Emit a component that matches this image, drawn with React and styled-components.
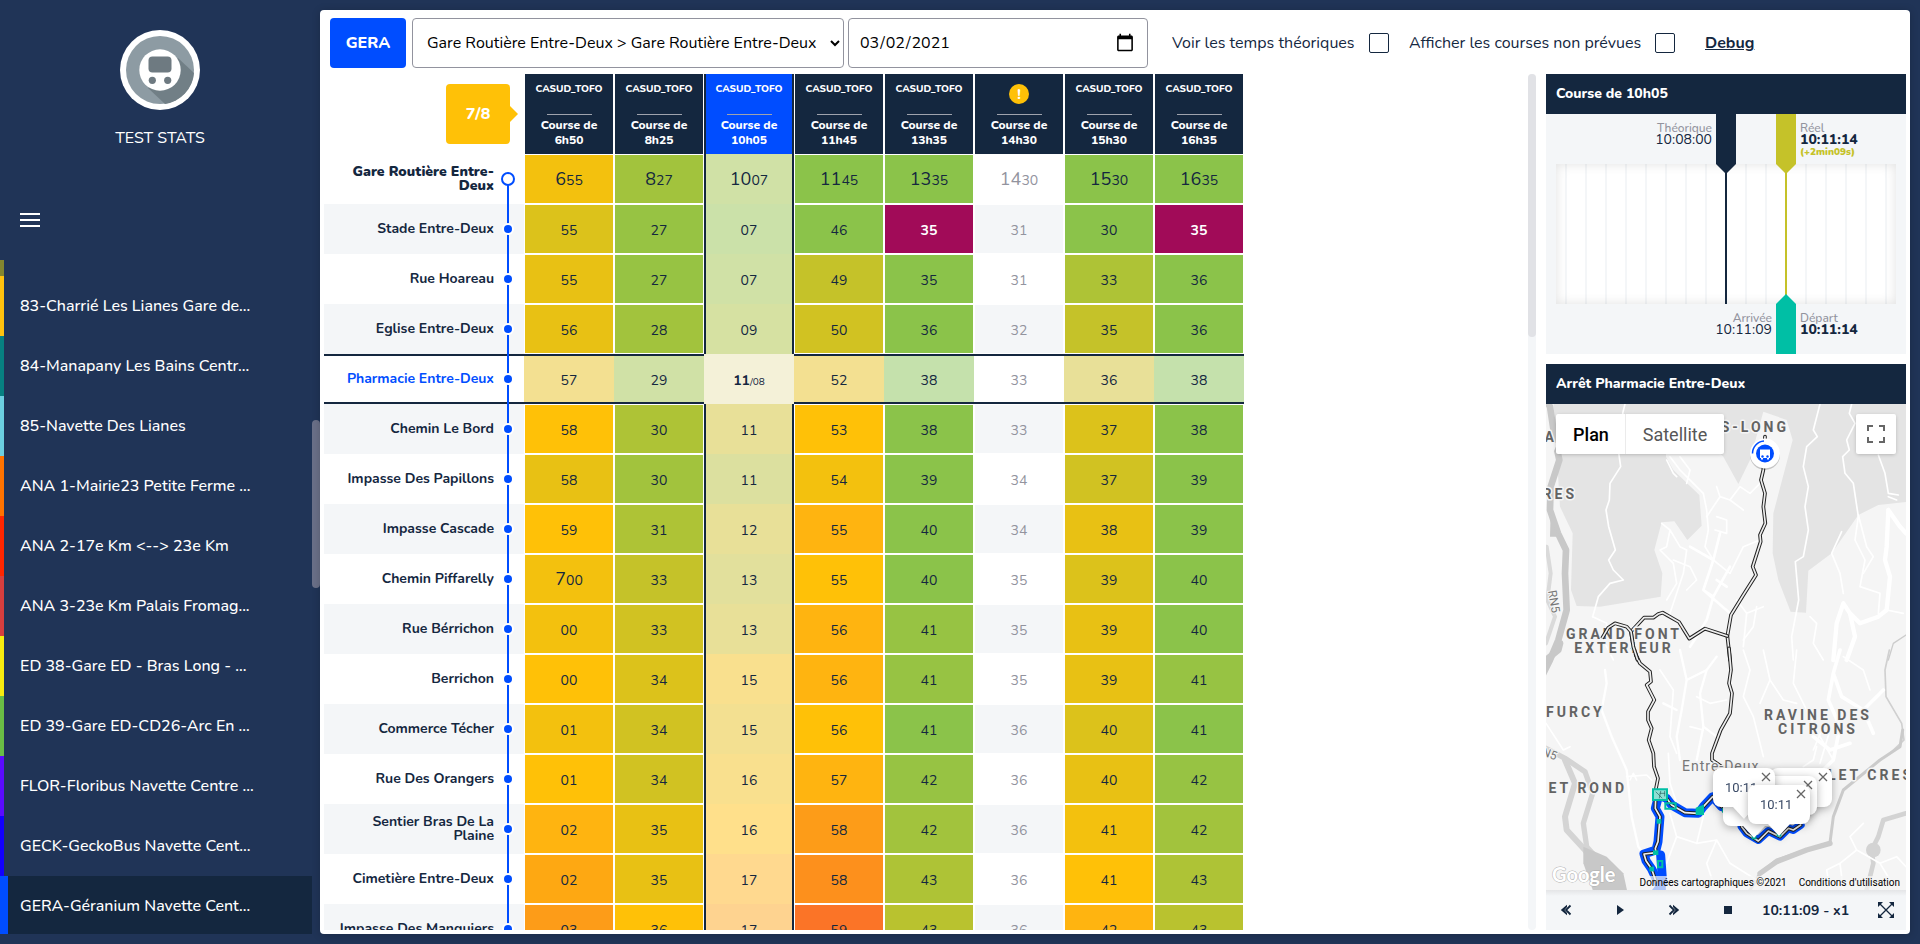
import React from "react";
import styled, { createGlobalStyle, css } from "styled-components";

const navy = "#14273f";
const blue = "#004dff";
const pale = "#f4f6f8";
const grey = "#92939e";
const amber = "#ffc107";

const GlobalStyle = createGlobalStyle`
  *, *::before, *::after { box-sizing: border-box; }
  body {
    margin: 0;
    background: #203457;
    color: ${navy};
    font-family: Nunito, Lato, "Noto Sans", sans-serif;
    font-size: 16px;
  }
  button, input, select { font: inherit; color: inherit; }
`;

/* ---------- data ---------- */

const lines = [
  { name: "83-Charrié Les Lianes Gare de...", color: "#ffc20e" },
  { name: "84-Manapany Les Bains Centr...", color: "#078081" },
  { name: "85-Navette Des Lianes", color: "#6ccfe0" },
  { name: "ANA 1-Mairie23 Petite Ferme ...", color: "#ff7300" },
  { name: "ANA 2-17e Km <--> 23e Km", color: "#ff2600" },
  { name: "ANA 3-23e Km Palais Fromag...", color: "#d63e3e" },
  { name: "ED 38-Gare ED - Bras Long - ...", color: "#f7ec0f" },
  { name: "ED 39-Gare ED-CD26-Arc En ...", color: "#69bd45" },
  { name: "FLOR-Floribus Navette Centre ...", color: "#5b0bff" },
  { name: "GECK-GeckoBus Navette Cent...", color: "#1200ff" },
  { name: "GERA-Géranium Navette Cent...", color: blue, selected: true },
];

const runs = [
  { time: "6h50", device: "CASUD_TOFO" },
  { time: "8h25", device: "CASUD_TOFO" },
  { time: "10h05", device: "CASUD_TOFO", active: true },
  { time: "11h45", device: "CASUD_TOFO" },
  { time: "13h35", device: "CASUD_TOFO" },
  { time: "14h30", missing: true },
  { time: "15h30", device: "CASUD_TOFO" },
  { time: "16h35", device: "CASUD_TOFO" },
];

const delayScale = [
  [139, 195, 74], [151, 195, 67], [162, 195, 61], [174, 195, 54],
  [185, 194, 47], [197, 194, 41], [209, 194, 34], [220, 194, 27],
  [232, 193, 20], [243, 193, 14], [255, 193, 7], [255, 180, 16],
  [254, 168, 18], [253, 156, 24], [253, 144, 28], [251, 116, 39],
];

// Each entry is "minutes:delay level"; "hour.minutes" opens a new hour,
// "e" marks an early run and "n" a run without any reading.
const stops = [
  ["Gare Routière Entre-Deux", "6.55:9 8.27:2 10.07:2 11.45:0 13.35:0 14.30:n 15.30:0 16.35:0"],
  ["Stade Entre-Deux", "55:7 27:1 07:1 46:0 35:e 31:n 30:0 35:e"],
  ["Rue Hoareau", "55:8 27:1 07:2 49:5 35:0 31:n 33:3 36:0"],
  ["Eglise Entre-Deux", "56:8 28:2 09:3 50:6 36:0 32:n 35:5 36:0"],
  ["Pharmacie Entre-Deux", "57:8 29:2 11/08:x 52:8 38:0 33:n 36:6 38:0"],
  ["Chemin Le Bord", "58:10 30:3 11:6 53:10 38:0 33:n 37:7 38:0"],
  ["Impasse Des Papillons", "58:8 30:2 11:4 54:9 39:0 34:n 37:6 39:0"],
  ["Impasse Cascade", "59:10 31:3 12:6 55:11 40:0 34:n 38:8 39:0"],
  ["Chemin Piffarelly", "7.00:9 33:5 13:5 55:10 40:0 35:n 39:7 40:0"],
  ["Rue Bérrichon", "00:9 33:6 13:6 56:11 41:1 35:n 39:8 40:0"],
  ["Berrichon", "00:10 34:7 15:9 56:11 41:1 35:n 39:8 41:1"],
  ["Commerce Técher", "01:9 34:6 15:8 56:10 41:0 36:n 40:7 41:0"],
  ["Rue Des Orangers", "01:10 34:6 16:9 57:11 42:1 36:n 40:8 42:1"],
  ["Sentier Bras De La Plaine", "02:11 35:8 16:10 58:13 42:2 36:n 41:9 42:2"],
  ["Cimetière Entre-Deux", "02:12 35:8 17:11 58:14 43:3 36:n 41:10 43:3"],
  ["Impasse Des Manguiers", "03:13 36:10 17:12 59:15 43:4 36:n 42:11 43:4"],
];
const selectedStop = 4;

function cellColor(level, soft) {
  if (level === "e") return "#a10b58";
  if (level === "x") return "#f4f1d8";
  if (level === "n") return "transparent";
  const rgb = delayScale[Number(level)];
  if (!soft) return `rgb(${rgb.join(",")})`;
  const [r, g, b] = rgb.map((c) => Math.round(c / 2 + 127));
  return `rgb(${r},${g},${b + 8})`;
}

/* ---------- shell ---------- */

const Shell = styled.div`
  display: flex;
  height: 100vh;
  padding: 0 10px 10px 0;
`;

const Sidebar = styled.aside`
  flex: 0 0 320px;
  display: flex;
  flex-direction: column;
  color: #fff;
`;

const Brand = styled.div`
  display: flex;
  flex-direction: column;
  align-items: center;
  gap: 18px;
  padding-top: 30px;
  line-height: 20px;
`;

const MenuButton = styled.button`
  display: flex;
  flex-direction: column;
  gap: 4px;
  width: 20px;
  margin: 65px 0 33px 20px;
  padding: 0;
  border: 0;
  background: none;
  span { height: 2px; background: #fff; }
`;

const LineArea = styled.div`
  flex: 1;
  display: flex;
  min-height: 0;
  overflow: hidden;
`;

const LineList = styled.nav`
  flex: 1;
  min-width: 0;
`;

const PreviousLine = styled.div`
  height: 16px;
  border-left: 4px solid #83862f;
`;

const LineLink = styled.a`
  display: flex;
  align-items: center;
  height: 60px;
  padding-left: ${(p) => (p.$selected ? 12 : 16)}px;
  border-left: ${(p) => (p.$selected ? 8 : 4)}px solid ${(p) => p.$color};
  background: ${(p) => (p.$selected ? navy : "transparent")};
  color: #fff;
  font-weight: 500;
  text-decoration: none;
  white-space: nowrap;
`;

const SideScroll = styled.div`
  width: 8px;
  padding-top: 160px;
  &::before {
    content: "";
    display: block;
    height: 168px;
    border-radius: 4px;
    background: #6a7088;
  }
`;

const Panel = styled.main`
  flex: 1;
  min-width: 0;
  display: flex;
  flex-direction: column;
  margin-top: 10px;
  padding: 8px 4px 4px;
  border-radius: 4px;
  background: #fff;
  box-shadow: 0 1px 8px rgba(0, 0, 0, 0.2);
`;

/* ---------- toolbar ---------- */

const Toolbar = styled.form`
  display: flex;
  align-items: center;
  height: 50px;
  margin-bottom: 6px;
  padding-left: 6px;
`;

const LineTag = styled.span`
  display: grid;
  place-items: center;
  width: 76px;
  height: 50px;
  margin-right: 6px;
  border-radius: 4px;
  background: ${blue};
  color: #fff;
  font-weight: 800;
`;

const field = css`
  height: 50px;
  border: 1px solid ${grey};
  border-radius: 4px;
  background: #fff;
  color: #000;
  font-size: 16px;
`;

const RouteSelect = styled.select`
  ${field}
  width: 432px;
  margin-right: 4px;
  padding: 0 0 0 10px;
`;

const DateField = styled.input`
  ${field}
  width: 300px;
  margin-right: 24px;
  padding: 0 12px 0 10px;
  &::-webkit-calendar-picker-indicator {
    width: 20px;
    height: 20px;
    padding: 0;
  }
`;

const CheckLabel = styled.label`
  display: flex;
  align-items: center;
  justify-content: space-between;
  width: ${(p) => p.$width}px;
  margin-right: ${(p) => p.$gap}px;
`;

const CheckBox = styled.input`
  appearance: none;
  width: 20px;
  height: 20px;
  margin: 0;
  border: 1px solid ${navy};
  border-radius: 2px;
  &:checked { background: ${navy}; }
`;

const DebugLink = styled.a`
  color: ${navy};
  font-weight: 700;
`;

/* ---------- timetable ---------- */

const Workspace = styled.div`
  flex: 1;
  display: flex;
  min-height: 0;
`;

const TableArea = styled.section`
  flex: 1;
  min-width: 0;
  overflow: hidden;
`;

const TableScroll = styled.div`
  flex: 0 0 8px;
  margin-right: 10px;
  border-radius: 4px;
  background: ${pale};
  &::before {
    content: "";
    display: block;
    height: 263px;
    border-radius: 4px;
    background: #e1e2e6;
  }
`;

const Timetable = styled.table`
  width: 920px;
  table-layout: fixed;
  border-collapse: separate;
  border-spacing: 0;
  th, td { padding: 0; }
`;

const CornerCell = styled.td`
  width: 200px;
`;

const Counter = styled.div`
  position: relative;
  display: grid;
  place-items: center;
  width: 64px;
  height: 60px;
  margin-left: 122px;
  border-radius: 4px;
  background: ${amber};
  color: #fff;
  font-weight: 800;
  &::after {
    content: "";
    position: absolute;
    left: 100%;
    border: 8px solid transparent;
    border-right: 0;
    border-left-color: ${amber};
  }
`;

const RunHead = styled.th`
  width: 90px;
  height: 80px;
  vertical-align: top;
  border: solid ${(p) => (p.$active ? navy : "#fff")};
  border-width: 0 ${(p) => (p.$active ? 2 : 1)}px;
  background: ${(p) => (p.$active ? blue : navy)};
  color: #fff;
  font-size: 12px;
  font-weight: 800;
  line-height: 15px;
`;

const Device = styled.div`
  display: flex;
  justify-content: center;
  height: 40px;
  padding-top: ${(p) => (p.$missing ? 10 : 8)}px;
  font-size: 10px;
`;

const Warning = styled.span`
  display: grid;
  place-items: center;
  width: 20px;
  height: 20px;
  border-radius: 50%;
  background: ${amber};
  font-size: 14px;
`;

const RunTime = styled.div`
  width: 62px;
  margin: 0 auto;
  &::before {
    content: "";
    display: block;
    width: 45px;
    height: 1px;
    margin: 0 auto 3px;
    background: #9fa3ad;
  }
`;

const Row = styled.tr`
  background: ${(p) => (p.$striped ? pale : "#fff")};
`;

const ruled = css`
  box-shadow: inset 0 2px ${navy}, inset 0 -2px ${navy};
`;

const StopHead = styled.th`
  color: ${(p) => (p.$current ? blue : navy)};
  font-size: 14px;
  font-weight: ${(p) => (p.$first ? 900 : 700)};
  line-height: 14px;
  text-align: right;
  ${(p) => p.$current && ruled}
`;

const StopInner = styled.div`
  display: flex;
  align-items: center;
  justify-content: flex-end;
  gap: 7px;
  height: 50px;
  padding: 0 9px 0 14px;
`;

const Track = styled.span`
  flex: 0 0 14px;
  align-self: stretch;
  display: grid;
  place-items: center;
  background: linear-gradient(${blue}, ${blue}) center bottom / 2px ${(p) => (p.$first ? "50%" : "100%")} no-repeat;
`;

const Dot = styled.span`
  width: ${(p) => (p.$first ? 14 : 8)}px;
  height: ${(p) => (p.$first ? 14 : 8)}px;
  border-radius: 50%;
  ${(p) => p.$first
    ? css`background: #fff; border: 2px solid ${blue};`
    : css`background: ${blue}; box-shadow: 0 0 0 2px #fff;`}
`;

const TimeCell = styled.td`
  height: 50px;
  border: 1px solid #fff;
  background: ${(p) => p.$color};
  color: ${(p) => (p.$level === "n" ? grey : p.$level === "e" ? "#fff" : navy)};
  font-size: 14px;
  font-weight: ${(p) => (p.$level === "e" ? 700 : 400)};
  text-align: center;
  ${(p) => p.$column && css`border: solid ${navy}; border-width: 0 2px;`}
  ${(p) => p.$current && css`border: 0; ${ruled}`}
  ${(p) => p.$level === "x" && css`box-shadow: none;`}
  ${Timetable} && { padding-top: 2px; }
`;

const Hour = styled.span`
  font-size: 18px;
  line-height: 18px;
`;

const Planned = styled.span`
  font-size: 10px;
`;

/* ---------- right column ---------- */

const Details = styled.aside`
  flex: 0 0 360px;
  min-width: 0;
  display: flex;
  flex-direction: column;
  gap: 10px;
`;

const Card = styled.section`
  display: flex;
  flex-direction: column;
  flex: ${(p) => (p.$grow ? "1" : "none")};
  min-height: 0;
`;

const CardTitle = styled.h2`
  flex: 0 0 40px;
  margin: 0;
  padding-left: 10px;
  background: ${navy};
  color: #fff;
  font-size: 14px;
  font-weight: 800;
  line-height: 39px;
`;

const Chart = styled.div`
  position: relative;
  padding: 50px 10px;
  background: ${pale};
`;

const Plot = styled.div`
  height: 140px;
  background: repeating-linear-gradient(90deg, #fff 0 9px, ${pale} 9px 11px, #fff 11px 20px);
  box-shadow: inset 0 0 12px rgba(0, 0, 0, 0.12);
`;

const Marker = styled.div`
  position: absolute;
  ${(p) => (p.$up ? "bottom: 0;" : "top: 0;")}
  left: ${(p) => p.$at};
  width: 20px;
  height: 60px;
  margin-left: -10px;
  background: ${(p) => p.$color};
  clip-path: ${(p) => (p.$up
    ? "polygon(50% 0, 100% 10px, 100% 100%, 0 100%, 0 10px)"
    : "polygon(0 0, 100% 0, 100% 50px, 50% 100%, 0 50px)")};
`;

const MarkerLine = styled.div`
  position: absolute;
  top: 50px;
  left: ${(p) => p.$at};
  width: 2px;
  height: 140px;
  margin-left: -1px;
  background: ${(p) => p.$color};
`;

const Reading = styled.div`
  position: absolute;
  ${(p) => (p.$low ? "top: 198px;" : "top: 8px;")}
  ${(p) => (p.$before
    ? css`right: calc(100% - ${p.$at} + 14px); text-align: right;`
    : css`left: calc(${p.$at} + 14px);`)}
  font-size: 14px;
  font-weight: ${(p) => (p.$bold ? 800 : 400)};
  line-height: 12px;
  small { display: block; color: ${grey}; font-size: 12px; font-weight: 500; }
  em { display: block; color: #c5c229; font-size: 10px; font-style: normal; font-weight: 900; }
`;

const MapBox = styled.div`
  flex: 1;
  position: relative;
  overflow: hidden;
  min-height: 0;
  background: #f5f5f5;
  font-family: Roboto, sans-serif;
`;

const MapSvg = styled.svg`
  display: block;
  width: 100%;
  height: 100%;
`;

const MapTypes = styled.div`
  position: absolute;
  top: 10px;
  left: 10px;
  display: flex;
  border-radius: 2px;
  background: #fff;
  box-shadow: 0 1px 4px -1px rgba(0, 0, 0, 0.3);
`;

const MapType = styled.button`
  width: ${(p) => (p.$on ? 70 : 98)}px;
  height: 40px;
  padding: 0;
  border: 0;
  box-shadow: ${(p) => (p.$on ? "none" : "-1px 0 #ebebeb")};
  background: none;
  color: ${(p) => (p.$on ? "#000" : "#565656")};
  font-size: 18px;
  font-weight: ${(p) => (p.$on ? 500 : 400)};
`;

const FullscreenButton = styled.button`
  position: absolute;
  top: 10px;
  right: 10px;
  display: grid;
  place-items: center;
  width: 40px;
  height: 40px;
  padding: 0;
  border: 0;
  border-radius: 2px;
  background: #fff;
  box-shadow: 0 1px 4px -1px rgba(0, 0, 0, 0.3);
`;

const Bubble = styled.div`
  position: absolute;
  left: ${(p) => p.$x}px;
  top: ${(p) => p.$y}px;
  width: 62px;
  height: 39px;
  padding: 11px 0 0 12px;
  border-radius: 8px;
  background: #fff;
  filter: drop-shadow(0 2px 4px rgba(0, 0, 0, 0.3));
  color: #3a4a66;
  font-size: 13px;
  line-height: 18px;
  &::after {
    content: "";
    position: absolute;
    top: 100%;
    left: 20px;
    border: 11px solid transparent;
    border-top: 12px solid #fff;
    border-bottom: 0;
  }
`;

const BubbleClose = styled.button`
  position: absolute;
  top: 4px;
  right: 4px;
  display: grid;
  width: 10px;
  height: 10px;
  padding: 0;
  border: 0;
  background: none;
`;

const Credits = styled.div`
  position: absolute;
  right: 0;
  bottom: 0;
  display: flex;
  gap: 12px;
  padding: 0 6px;
  background: rgba(245, 245, 245, 0.7);
  color: #000;
  font-size: 10px;
  line-height: 14px;
  a { color: inherit; text-decoration: none; }
`;

const Player = styled.div`
  flex: 0 0 40px;
  display: flex;
  align-items: center;
  padding: 0 12px;
  background: linear-gradient(#e4e5e7, ${pale} 6px);
  font-size: 14px;
  font-weight: 700;
`;

const Transport = styled.div`
  display: flex;
  gap: 38px;
`;

const PlayerButton = styled.button`
  display: grid;
  place-items: center;
  width: 16px;
  height: 16px;
  padding: 0;
  border: 0;
  background: none;
`;

const Clock = styled.span`
  flex: 1;
  padding-left: 26px;
  white-space: nowrap;
`;

/* ---------- drawings ---------- */

const BusLogo = () => (
  <svg width="80" height="80" viewBox="0 0 80 80" role="img" aria-label="Bus">
    <circle cx="40" cy="40" r="40" fill="#fff" />
    <circle cx="40" cy="40" r="34" fill="#8d9ba3" />
    <path d="M58 28 L74 43 A34 34 0 0 1 45 74 L28 58 Z" fill="#717f86" />
    <circle cx="40" cy="40" r="20.7" fill="#fff" />
    <rect x="28.500" y="26.500" width="23" height="16" rx="4" fill="#6e7a81" />
    <circle cx="32.300" cy="50.300" r="3.600" fill="#6e7a81" />
    <circle cx="47.700" cy="50.300" r="3.600" fill="#6e7a81" />
  </svg>
);

const Chevrons = ({ flip }) => (
  <svg width="12" height="12" viewBox="0 0 12 12">
    <g transform={flip ? "translate(12 0) scale(-1 1)" : undefined}>
      <path d="M1.500 1.500 L6 6 L1.500 10.500" fill="none" stroke={navy} strokeWidth="1.800" />
      <path d="M5 0.800 L11.200 6 L5 11.200 V9 L7.500 6 L5 3 Z" fill={navy} />
    </g>
  </svg>
);

const routesUpper = [
  "M705 230 L700 330 693 360 705 400 700 440 706 490 690 525 692 545 668 620 678 645 640 705 603 765 592 828 600 900",
  "M592 828 L525 806 478 836 447 786 412 766 398 758 385 762 370 773 342 773 303 815 310 860 323 900",
];
const loopRoute = "M216 835 L235 803 255 790 290 800 303 815 310 860 323 900";
const routesLower = [
  "M597 -5 L603 60 597 100 606 130 600 190 572 240 546 310 546 330 575 350",
  "M308 -5 L330 40 360 65 363 95 350 105 373 150 354 185 354 210 365 235 356 270 370 310 372 350 384 385 378 415 376 475 390 500 384 575 376 595 378 608 342 612 348 632 365 657 378 695",
  "M385 435 L410 445 425 465 465 488 505 490 520 470 548 440 575 470",
  "M635 530 L650 550 685 573 715 543 750 560 775 535 790 540 812 525",
];

const Route = ({ d }) => (
  <>
    <path d={d} stroke="#222" strokeWidth="11" />
    <path d={d} stroke="#eee" strokeWidth="5" />
  </>
);

const MapDrawing = () => (
  <MapSvg viewBox="0 0 360 486" preserveAspectRatio="xMidYMid slice" role="img" aria-label="Carte de la ligne">
    <g transform="translate(-16 -44) scale(0.33333)" fill="none" strokeLinejoin="round" strokeLinecap="round">
      <path
        fill="#e4e4e4"
        d="M70 120 H1140 V425 L1045 435 985 465 905 580 835 632 828 758 782 755 745 660 728 580 730 460 788 240 770 180 700 155 660 300 625 372 580 290 540 250 H408 V290 L430 330 508 405 515 497 472 540 433 484 395 487 373 570 397 640 392 710 320 722 210 740 140 738 123 690 128 520 90 440 Z"
      />
      <path d="M48 120 L60 140 75 240 88 300 62 380 60 450 84 520 108 570 105 640 110 750 85 840 60 900 30 960" stroke="#c8c8c8" strokeWidth="20" />
      <path d="M62 450 L60 530 90 530 70 500 Z" fill="#c8c8c8" />
      <path d="M50 560 L62 640 52 720 75 770 48 850" stroke="#dadada" strokeWidth="12" />
      <path d="M68 255 L48 300" stroke="#f5f5f5" strokeWidth="22" />
      <path d="M1128 825 L1090 850 1075 900" stroke="#ccc" strokeWidth="4" />
      <g stroke="#fff" strokeWidth="5">
        <path d="M285 132 L278 160 290 200 262 250 272 320 240 370 238 420 228 450 236 500 256 570 236 600 250 630 280 660 240 670 205 710 188 770" />
        <path d="M870 132 L850 210 862 230 830 260 820 320 835 380 825 440 835 510 820 590 796 605 806 720 785 830 790 900" />
        <path d="M965 132 L958 160 975 190 950 240 958 270 938 290 945 340 970 370 985 470 975 540 1005 600 990 680 1050 700 1045 760" />
        <path d="M1045 285 L1065 340 1075 400 1105 405 M1075 410 L1100 420" />
        <path d="M420 290 L450 330 490 370 520 400 530 450 535 510 525 560 550 600 600 640 M450 290 L480 330 470 370 M410 300 L430 340 440 350" />
        <path d="M530 470 L570 410 600 420 640 450 M570 410 L560 380 M600 420 L630 380 660 400 690 370 M560 470 L590 480 590 520 555 510" />
        <path d="M395 490 L420 510 410 560 390 570 430 610 440 670 410 720 M420 510 L450 560 470 570 460 640 420 760 M430 600 L480 620 500 660 470 690" />
        <path d="M480 560 L550 600 570 520 M550 600 L520 690 550 710 600 620 M520 690 L600 760 M550 710 L530 780 500 830 480 860 M560 660 L590 680" strokeWidth="8" />
        <path d="M690 540 L640 560 600 640 M620 720 L650 760 700 740 M650 760 L640 860" />
        <path d="M935 515 L905 580 930 640 940 700 M985 465 L1010 560 1030 590 1000 640" />
        <path d="M1128 520 L1110 500 1075 450 M1075 450 L1070 560 1065 600 1080 650 1070 750 1045 770 990 790 960 760 940 730 920 790 910 900 M960 760 L975 830 950 900" strokeWidth="13" />
        <path d="M840 770 L860 790 850 850 880 900 M1070 750 L1120 760 M188 770 L230 790 225 850 250 900" />
        <path d="M640 840 L670 800 680 740" />
      </g>
      {routesUpper.map((d) => <Route key={d} d={d} />)}
    </g>
    <g transform="translate(-16 246) scale(0.33333)" fill="none" strokeLinejoin="round" strokeLinecap="round">
      <path d="M48 30 L85 0 90 -20" stroke="#c8c8c8" strokeWidth="20" />
      <path d="M48 295 L105 325 165 365 188 430 160 520 170 590 215 640 255 690" stroke="#d4d4d4" strokeWidth="16" />
      <path d="M105 330 L135 400 105 500 110 540 165 600 200 650" stroke="#d4d4d4" strokeWidth="18" />
      <path d="M160 590 L230 620 280 670 292 725 H190 L160 640 Z" fill="#c8c8c8" />
      <path d="M1078 0 L1065 60 1068 140 1115 220 1122 270 1080 310 1050 330" stroke="#d0d0d0" strokeWidth="5" />
      <path d="M1118 240 L1110 290 1050 330 940 420 910 500 900 578 830 600 740 630 690 670 660 720" stroke="#cbcbcb" strokeWidth="9" />
      <path d="M900 580 L830 600 740 635 690 670" stroke="#cbcbcb" strokeWidth="16" />
      <path d="M1128 490 L1060 510 1045 560 1025 600 1030 640 1010 720" stroke="#d3d3d3" strokeWidth="14" />
      <circle cx="1030" cy="600" r="22" fill="#d3d3d3" />
      <g stroke="#fff" strokeWidth="5">
        <path d="M225 60 L230 100 215 180 245 260 290 360 305 500 325 590 345 620" strokeWidth="7" />
        <path d="M48 220 L100 300 120 290 M290 380 L350 375 365 390 M300 390 L310 370 320 390" />
        <path d="M450 0 L470 90 455 180 440 260 450 330 M470 90 L530 60 560 20 M530 60 L510 130 520 230 500 330 M440 180 L400 160 M520 230 L560 260" strokeWidth="7" />
        <path d="M390 60 L430 120 420 260 440 310 M500 140 L540 160 590 150 M480 230 L520 240 M415 310 L420 400 440 460" />
        <path d="M640 0 L660 60 640 140 670 200 700 320 M700 0 L720 90 690 160 M800 0 L790 100 830 180 870 260 910 330 M720 90 L760 150 800 160" />
        <path d="M930 0 L910 70 935 140 1000 180 1030 250 M910 70 L895 150 930 230 910 330 880 360 M850 260 L900 300 960 280 M1000 180 L1060 120" strokeWidth="11" />
        <path d="M940 20 L1000 60 1020 120 M860 290 L850 330 820 350 M880 230 L850 300 M900 240 L870 340" />
        <path d="M420 490 L440 560 500 580 560 570 600 640 680 690 M440 560 L410 640 M500 580 L520 500 M560 570 L530 640 550 700" />
        <path d="M940 720 L930 640 980 600 1050 640 1100 620 1128 650 M980 600 L960 560 1000 520 M900 720 L890 660 930 640 M1050 640 L1080 690" />
      </g>
      <g stroke="#004dff" strokeWidth="27">
        <path d="M385 435 L410 445 425 465 465 488 505 490 520 470 548 440 575 470" />
        <path d="M385 440 L376 475 390 500 384 575 378 600 342 612 348 632 365 657 385 700" />
        <path d="M635 530 L650 550 685 570 715 543 750 560 775 535 790 540 812 525" strokeWidth="24" />
        <path d="M392 615 L398 700" />
      </g>
      <path d="M385 600 L402 625 408 725 H362 L390 690 Z" fill="#004dff" />
      {routesLower.map((d) => <Route key={d} d={d} />)}
      <g stroke="#00bfa5" strokeWidth="6" strokeLinejoin="miter">
        <path d="M369 418 H411 V450 H369 Z" fill="#8ee0d4" />
        <path d="M378 426 L396 444 M392 424 L388 444 M404 424 V438 M390 430 H404" stroke="#245f5c" strokeWidth="2" />
        <path d="M406 460 H437 V476 H406 Z M384 633 H397 V652 H384 Z" />
        <path d="M500 475 L519 468 V492 H500 Z" fill="#00bfa5" />
      </g>
      <g fill="#00bfa5">
        <rect x="380" y="507" width="14" height="14" />
        <rect x="369" y="601" width="16" height="14" />
        <rect x="358" y="650" width="14" height="14" />
        <rect x="576" y="474" width="12" height="14" />
        <rect x="665" y="556" width="14" height="12" />
        <rect x="740" y="548" width="14" height="12" />
      </g>
    </g>
    <g fontSize="14" fontWeight="700" fill="#636363" stroke="#f5f5f5" strokeWidth="3" paintOrder="stroke" strokeLinejoin="round" letterSpacing="3">
      <text x="243" y="28" textAnchor="end">BRAS-LONG</text>
      <text x="11" y="38" textAnchor="end">A</text>
      <text x="31" y="95" textAnchor="end">RES</text>
      <text x="78" y="235" textAnchor="middle">GRAND FONT</text>
      <text x="78" y="249" textAnchor="middle">EXTERIEUR</text>
      <text x="0" y="313">FURCY</text>
      <text x="272" y="316" textAnchor="middle">RAVINE DES</text>
      <text x="272" y="330" textAnchor="middle">CITRONS</text>
      <text x="81" y="389" textAnchor="end">LET ROND</text>
      <text x="282" y="376">LET CRES</text>
    </g>
    <g fill="#777" stroke="#f5f5f5" strokeWidth="2" paintOrder="stroke">
      <text x="136" y="367" fontSize="14" letterSpacing="1">Entre-Deux</text>
      <text x="2" y="187" fontSize="12" transform="rotate(80 2 187)">RN5</text>
      <text x="-5" y="351" fontSize="12" transform="rotate(20 -5 351)">N5</text>
    </g>
    <g transform="translate(-16 -44) scale(0.33333)" fill="none" strokeLinejoin="round">
      <Route d={loopRoute} />
    </g>
    <text x="6" y="478" fontFamily="Lato, sans-serif" fontSize="20" fontWeight="700" fill="#fff" stroke="#b0b0b0" strokeWidth="1" paintOrder="stroke">Google</text>
    <circle cx="219" cy="51" r="15" fill="#000" opacity="0.200" />
    <circle cx="219" cy="49.500" r="15" fill="#fff" />
    <path d="M206.500 49.500 A12.500 12.500 0 0 1 218 37" fill="none" stroke="#004dff" strokeWidth="1.500" />
    <circle cx="219" cy="49.500" r="9" fill="#004dff" />
    <path d="M214 45.500 H224 V54 H214 Z" fill="#fff" />
    <circle cx="216.500" cy="52.500" r="1.200" fill="#004dff" />
    <circle cx="221.500" cy="52.500" r="1.200" fill="#004dff" />
    <path d="M215 54 h2 v1.500 h-2 Z M221 54 h2 v1.500 h-2 Z" fill="#fff" />
  </MapSvg>
);

const CloseIcon = () => (
  <svg width="10" height="10" viewBox="0 0 10 10">
    <path d="M1 1 L9 9 M9 1 L1 9" stroke="#666" strokeWidth="1.300" />
  </svg>
);

const MapBubble = ({ x, y, label }) => (
  <Bubble $x={x} $y={y}>
    {label}
    <BubbleClose type="button" aria-label="Fermer"><CloseIcon /></BubbleClose>
  </Bubble>
);

/* ---------- composed parts ---------- */

function TimeText({ value }) {
  if (value.includes("/")) {
    const [real, planned] = value.split("/");
    return <><strong>{real}</strong><Planned>/{planned}</Planned></>;
  }
  if (value.includes(".")) {
    const [hour, minutes] = value.split(".");
    return <><Hour>{hour}</Hour>{minutes}</>;
  }
  return value;
}

function StopRow({ name, times, index }) {
  const current = index === selectedStop;
  const first = index === 0;
  return (
    <Row $striped={index % 2 === 1}>
      <StopHead scope="row" $current={current} $first={first}>
        <StopInner>
          <span>{name}</span>
          <Track $first={first}><Dot $first={first} /></Track>
        </StopInner>
      </StopHead>
      {times.split(" ").map((entry, i) => {
        const [value, level] = entry.split(":");
        const column = Boolean(runs[i].active);
        return (
          <TimeCell
            key={runs[i].time}
            $level={level}
            $column={column}
            $current={current}
            $color={cellColor(level, column || current)}
          >
            <TimeText value={value} />
          </TimeCell>
        );
      })}
    </Row>
  );
}

export default function App() {
  return (
    <>
      <GlobalStyle />
      <Shell>
        <Sidebar>
          <Brand><BusLogo />TEST STATS</Brand>
          <MenuButton type="button" aria-label="Menu"><span /><span /><span /></MenuButton>
          <LineArea>
            <LineList>
              <PreviousLine />
              {lines.map((l) => (
                <LineLink key={l.name} href="#" $color={l.color} $selected={l.selected}>{l.name}</LineLink>
              ))}
            </LineList>
            <SideScroll />
          </LineArea>
        </Sidebar>

        <Panel>
          <Toolbar>
            <LineTag>GERA</LineTag>
            <RouteSelect aria-label="Itinéraire">
              <option>Gare Routière Entre-Deux &gt; Gare Routière Entre-Deux</option>
            </RouteSelect>
            <DateField type="date" aria-label="Date" defaultValue="2021-03-02" />
            <CheckLabel $width={217} $gap={20}>Voir les temps théoriques<CheckBox type="checkbox" /></CheckLabel>
            <CheckLabel $width={266} $gap={30}>Afficher les courses non prévues<CheckBox type="checkbox" /></CheckLabel>
            <DebugLink href="#">Debug</DebugLink>
          </Toolbar>

          <Workspace>
            <TableArea>
              <Timetable>
                <thead>
                  <tr>
                    <CornerCell><Counter>7/8</Counter></CornerCell>
                    {runs.map((r) => (
                      <RunHead key={r.time} scope="col" $active={r.active}>
                        <Device $missing={r.missing}>{r.missing ? <Warning>!</Warning> : r.device}</Device>
                        <RunTime>Course de {r.time}</RunTime>
                      </RunHead>
                    ))}
                  </tr>
                </thead>
                <tbody>
                  {stops.map(([name, times], i) => (
                    <StopRow key={name} name={name} times={times} index={i} />
                  ))}
                </tbody>
              </Timetable>
            </TableArea>
            <TableScroll />

            <Details>
              <Card>
                <CardTitle>Course de 10h05</CardTitle>
                <Chart>
                  <Plot />
                  <MarkerLine $at="50%" $color={navy} />
                  <MarkerLine $at="calc(50% + 60px)" $color="#c5c229" />
                  <Marker $at="50%" $color={navy} />
                  <Marker $at="calc(50% + 60px)" $color="#c5c229" />
                  <Marker $at="calc(50% + 60px)" $color="#00bfa5" $up />
                  <Reading $at="50%" $before><small>Théorique</small>10:08:00</Reading>
                  <Reading $at="(50% + 60px)" $bold><small>Réel</small>10:11:14<em>(+2min09s)</em></Reading>
                  <Reading $at="(50% + 60px)" $before $low><small>Arrivée</small>10:11:09</Reading>
                  <Reading $at="(50% + 60px)" $bold $low><small>Départ</small>10:11:14</Reading>
                </Chart>
              </Card>

              <Card $grow>
                <CardTitle>Arrêt Pharmacie Entre-Deux</CardTitle>
                <MapBox>
                  <MapDrawing />
                  <MapTypes>
                    <MapType type="button" $on>Plan</MapType>
                    <MapType type="button">Satellite</MapType>
                  </MapTypes>
                  <FullscreenButton type="button" aria-label="Plein écran">
                    <svg width="18" height="18" viewBox="0 0 18 18">
                      <path d="M1 6 V1 H6 M12 1 H17 V6 M17 12 V17 H12 M6 17 H1 V12" fill="none" stroke="#666" strokeWidth="2" />
                    </svg>
                  </FullscreenButton>
                  <MapBubble x={224} y={364} />
                  <MapBubble x={177} y={383} />
                  <MapBubble x={209} y={372} />
                  <MapBubble x={167} y={364} label="10:11" />
                  <MapBubble x={202} y={381} label="10:11" />
                  <Credits>
                    <span>Données cartographiques ©2021</span>
                    <a href="#">Conditions d'utilisation</a>
                  </Credits>
                </MapBox>
                <Player>
                  <Transport>
                    <PlayerButton type="button" aria-label="Reculer"><Chevrons flip /></PlayerButton>
                    <PlayerButton type="button" aria-label="Lecture">
                      <svg width="12" height="12" viewBox="0 0 12 12"><path d="M3 1 L10 6 L3 11 Z" fill={navy} /></svg>
                    </PlayerButton>
                    <PlayerButton type="button" aria-label="Avancer"><Chevrons /></PlayerButton>
                    <PlayerButton type="button" aria-label="Arrêter">
                      <svg width="8" height="8" viewBox="0 0 8 8"><path d="M0 0 H8 V8 H0 Z" fill={navy} /></svg>
                    </PlayerButton>
                  </Transport>
                  <Clock>10:11:09 - x1</Clock>
                  <PlayerButton type="button" aria-label="Agrandir">
                    <svg width="16" height="16" viewBox="0 0 16 16">
                      <path d="M1 1 L15 15 M15 1 L1 15" stroke={navy} strokeWidth="1.300" />
                      <path d="M0 0 H5 L0 5 Z M16 0 V5 L11 0 Z M16 16 H11 L16 11 Z M0 16 V11 L5 16 Z" fill={navy} />
                    </svg>
                  </PlayerButton>
                </Player>
              </Card>
            </Details>
          </Workspace>
        </Panel>
      </Shell>
    </>
  );
}
